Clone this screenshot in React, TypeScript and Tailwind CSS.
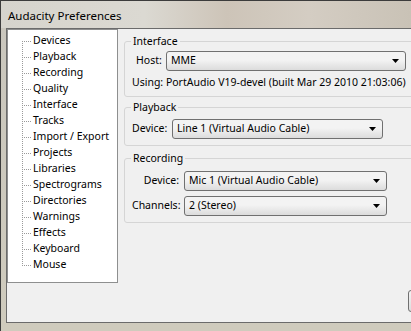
import { ReactNode } from 'react';

const pages = [
  'Devices',
  'Playback',
  'Recording',
  'Quality',
  'Interface',
  'Tracks',
  'Import / Export',
  'Projects',
  'Libraries',
  'Spectrograms',
  'Directories',
  'Warnings',
  'Effects',
  'Keyboard',
  'Mouse',
];

const TreeConnector = ({ first, last }: { first: boolean; last: boolean }) => (
  <svg width="10" height="16" className="shrink-0" shapeRendering="crispEdges">
    <line
      x1="0.5"
      y1={first ? 8 : 0}
      x2="0.5"
      y2={last ? 9 : 16}
      stroke="#9a9a9a"
      strokeDasharray="1 1"
    />
    <line x1="2" y1="8.5" x2="9" y2="8.5" stroke="#9a9a9a" strokeDasharray="1 1" />
  </svg>
);

const Combo = ({ value, className }: { value: string; className: string }) => (
  <div
    className={`flex h-[20px] items-center justify-between rounded-[3px] border border-[#707070] bg-gradient-to-b from-[#f3f3f3] from-45% to-[#dcdcdc] pr-[6px] pl-[4px] ${className}`}
  >
    <span>{value}</span>
    <svg width="7" height="4" viewBox="0 0 7 4">
      <path d="M0 0H7L3.5 4Z" fill="#000" />
    </svg>
  </div>
);

const Group = ({
  title,
  className,
  children,
}: {
  title: string;
  className?: string;
  children: ReactNode;
}) => (
  <fieldset
    className={`w-[310px] rounded-[3px] border border-[#d5d5d5] px-0 ${className ?? ''}`}
  >
    <legend className="ml-[6px] px-[2px] leading-[14px]">{title}</legend>
    {children}
  </fieldset>
);

export default function App() {
  return (
    <div className="relative h-[331px] w-[411px] overflow-hidden font-['Noto_Sans',sans-serif] text-[10.5px] text-black">
      <div className="flex h-full flex-col border-t border-l border-[#3c3c3c] bg-gradient-to-b from-[#c9c6bd] to-[#cfcbbd]">
        {/* Title bar */}
        <div className="flex h-[27px] shrink-0 items-center bg-[linear-gradient(to_right,#d6d4cd,#dbd9d2_35%,#cdc4b8_55%,#d4cdc3_75%,#c9c2b6)] pt-[3px] pl-[7px] text-[11.5px] text-black">
          Audacity Preferences
        </div>

        <div className="flex flex-1 pb-[8px] pl-[5px]">
          {/* Client area */}
          <div className="flex h-[295px] flex-1 flex-col border-t border-l border-b border-[#6b6b6b] bg-[#f0f0f0]">
            <div className="flex">
              {/* Page tree */}
              <div className="h-[254px] w-[111px] shrink-0 border border-[#8e8f8f] bg-white pt-[3px] pl-[14px]">
                {pages.map((p, i) => (
                  <div key={p} className="flex h-4 items-center">
                    <TreeConnector first={i === 0} last={i === pages.length - 1} />
                    <span className="pl-[1px] whitespace-nowrap">{p}</span>
                  </div>
                ))}
              </div>

              {/* Settings */}
              <div className="ml-[6px] flex flex-col pt-[5px]">
                <Group title="Interface" className="h-[63px]">
                  <div className="flex items-center pt-[3px] pl-[11px]">
                    <span className="w-[30px]">Host:</span>
                    <Combo value="MME" className="w-[240px]" />
                  </div>
                  <div className="pt-[4px] pl-[7px] whitespace-nowrap">
                    Using: PortAudio V19-devel (built Mar 29 2010 21:03:06)
                  </div>
                </Group>

                <Group title="Playback" className="mt-[3px] h-[46px]">
                  <div className="flex items-center pt-[5px] pl-[7px]">
                    <span className="w-[40px]">Device:</span>
                    <Combo value="Line 1 (Virtual Audio Cable)" className="w-[211px]" />
                  </div>
                </Group>

                <Group title="Recording" className="mt-[5px] h-[72px]">
                  <div className="grid grid-cols-[52px_203px] items-center gap-y-[5px] pt-[6px] pl-[7px]">
                    <span className="pr-[5px] text-right">Device:</span>
                    <Combo value="Mic 1 (Virtual Audio Cable)" className="w-[203px]" />
                    <span className="pr-[5px] text-right">Channels:</span>
                    <Combo value="2 (Stereo)" className="w-[203px]" />
                  </div>
                </Group>
              </div>
            </div>

            {/* Dialog buttons (cut off) */}
            <div className="mt-[7px] flex pl-[401px]">
              <div className="h-[22px] w-[75px] shrink-0 rounded-[3px] border border-[#707070] bg-gradient-to-b from-[#f3f3f3] to-[#dcdcdc]" />
            </div>
          </div>
        </div>
      </div>
    </div>
  );
}
